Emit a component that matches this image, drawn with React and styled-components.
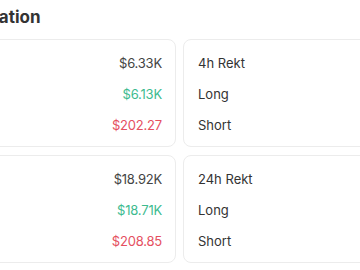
import React from 'react';
import styled, { createGlobalStyle } from 'styled-components';

const GlobalStyle = createGlobalStyle`
    html, body {
        margin: 0;
        padding: 0;
        background: #fff;
        overflow: hidden;
    }
    body {
        font-family: Inter, "Noto Sans", sans-serif;
    }
`;

const Page = styled.div`
    width: 420px;
    margin-left: -41px;
    padding-top: 6px;
`;

const Title = styled.h2`
    margin: 0 0 11px -11px;
    font-size: 17px;
    line-height: 22px;
    font-weight: 700;
    color: #333;
`;

const Grid = styled.div`
    display: grid;
    grid-template-columns: 217px 217px;
    column-gap: 7px;
    row-gap: 8px;
`;

const Card = styled.div`
    border: 1px solid #ececec;
    border-radius: 8px;
    padding: 13px 13px 11px 14px;
    display: flex;
    flex-direction: column;
    gap: 11px;
    align-items: ${p => (p.$right ? 'flex-end' : 'flex-start')};
`;

const Row = styled.div`
    font-size: 13px;
    line-height: 20px;
    color: ${p => p.$color || '#333'};
    letter-spacing: ${p => (p.$color ? '-0.2px' : '0')};
`;

const stats = [
    { label: '4h Rekt', total: '$6.33K', long: '$6.13K', short: '$202.27' },
    { label: '24h Rekt', total: '$18.92K', long: '$18.71K', short: '$208.85' },
];

export default function App() {
    return (
        <Page>
            <GlobalStyle />
            <Title>Liquidation</Title>
            <Grid>
                {stats.map(s => (
                    <React.Fragment key={s.label}>
                        <Card $right>
                            <Row $color="#444">{s.total}</Row>
                            <Row $color="#3dbb8f">{s.long}</Row>
                            <Row $color="#e5505f">{s.short}</Row>
                        </Card>
                        <Card>
                            <Row>{s.label}</Row>
                            <Row>Long</Row>
                            <Row>Short</Row>
                        </Card>
                    </React.Fragment>
                ))}
            </Grid>
        </Page>
    );
}
